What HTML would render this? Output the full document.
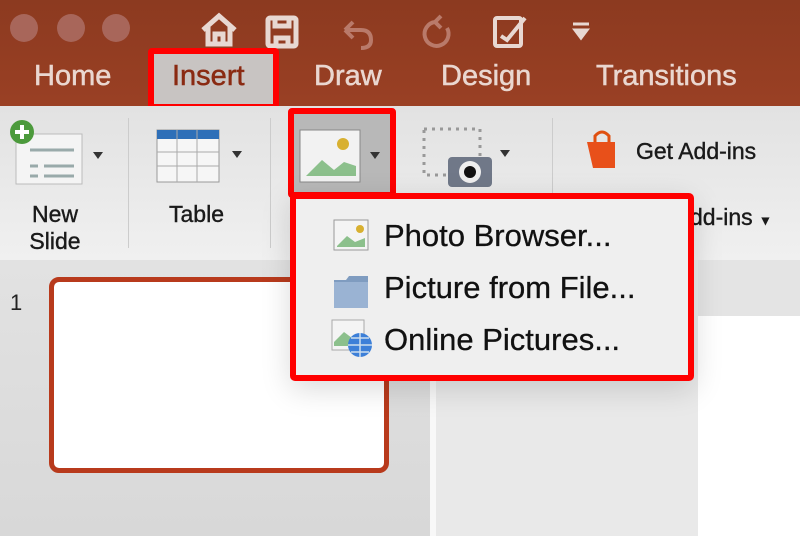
<!DOCTYPE html>
<html><head><style>
*{margin:0;padding:0;box-sizing:border-box}
body{width:800px;height:536px;overflow:hidden;position:relative;font-family:"Liberation Sans",sans-serif;background:#e6e6e6}
.a{position:absolute;white-space:nowrap}
.t{color:#ead7d0;font-size:29px;-webkit-text-stroke:0.5px #ead7d0;top:60px}
.r{font-size:23px;color:#1a1a1a;-webkit-text-stroke:0.4px #1a1a1a}
.m{font-size:31px;color:#111;-webkit-text-stroke:0.3px #111}
</style></head><body>
<div class="a" style="left:0;top:0;width:800px;height:106px;background:linear-gradient(#8c3a20,#9a4024)"></div>
<div class="a" style="left:10px;top:14px;width:28px;height:28px;border-radius:50%;background:#a8665a"></div>
<div class="a" style="left:57px;top:14px;width:28px;height:28px;border-radius:50%;background:#a8665a"></div>
<div class="a" style="left:102px;top:14px;width:28px;height:28px;border-radius:50%;background:#a8665a"></div>
<svg class="a" style="left:195px;top:8px" width="420" height="45" viewBox="0 0 420 45">
<g fill="none" stroke="#e8d8d2" stroke-width="5">
<path d="M8 22 L24 8 L40 22 M13 19 V36 H35 V19 M20 36 V26 H28 V36"/>
<rect x="73" y="10" width="28" height="28" rx="2"/><path d="M80 10 V18 H94 V10 M81 38 V30 H93 V38"/>
</g>
<g fill="none" stroke="#b97a6a" stroke-width="4">
<path d="M150 22 H166 Q176 22 176 32 Q176 40 166 40 M150 22 L158 14 M150 22 L158 30"/>
<path d="M240 14 A12 12 0 1 0 252 20 M240 14 L246 8 M240 14 L246 20"/>
</g>
<g fill="none" stroke="#e8d8d2" stroke-width="4"><rect x="300" y="10" width="26" height="28" rx="2"/><path d="M306 28 L312 32 L330 10"/></g>
<path d="M378 16 H394 M380 22 H392 L386 30 Z" stroke="#e8d8d2" stroke-width="3" fill="#e8d8d2"/>
</svg>
<div class="a t" style="left:34px">Home</div>
<div class="a" style="left:148px;top:48px;width:131px;height:62px;border:6px solid #f00;border-radius:4px;background:#c8c4c2"></div>
<div class="a t" style="left:172px;color:#8a2a12;-webkit-text-stroke:0.5px #8a2a12">Insert</div>
<div class="a t" style="left:314px">Draw</div>
<div class="a t" style="left:441px">Design</div>
<div class="a t" style="left:596px">Transitions</div>
<div class="a" style="left:0;top:106px;width:800px;height:154px;background:linear-gradient(#e2e2e2,#f0f0f0)"></div>
<div class="a" style="left:128px;top:118px;width:1px;height:130px;background:#ccc"></div>
<div class="a" style="left:270px;top:118px;width:1px;height:130px;background:#ccc"></div>
<div class="a" style="left:552px;top:118px;width:1px;height:80px;background:#ccc"></div>
<svg class="a" style="left:8px;top:118px" width="100" height="80">
<rect x="8" y="16" width="66" height="50" fill="#f4f4f4" stroke="#bbb"/>
<path d="M22 32H66M22 48H30M36 48H66M22 58H30M36 58H66" stroke="#9aa" stroke-width="3"/>
<circle cx="14" cy="14" r="12" fill="#4c9a3c"/><path d="M14 7V21M7 14H21" stroke="#fff" stroke-width="4"/>
<path d="M85 34h10l-5 7z" fill="#333"/>
</svg>
<svg class="a" style="left:155px;top:128px" width="95" height="60">
<rect x="2" y="2" width="62" height="52" fill="#f6f6f6" stroke="#999"/><rect x="2" y="2" width="62" height="9" fill="#2e6fb8"/>
<path d="M22 2V54M42 2V54M2 24H64M2 38H64" stroke="#aaa"/><path d="M77 23h10l-5 7z" fill="#333"/>
</svg>
<div class="a r" style="left:25px;top:201px;text-align:center;width:60px;line-height:27px">New<br>Slide</div>
<div class="a r" style="left:169px;top:201px">Table</div>
<div class="a" style="left:288px;top:108px;width:108px;height:90px;border:6px solid #f00;border-radius:4px;background:#b8b8b8"></div>
<svg class="a" style="left:298px;top:128px" width="90" height="60">
<rect x="2" y="2" width="60" height="52" fill="#f2f2f2" stroke="#888"/>
<circle cx="45" cy="16" r="6" fill="#d8b030"/><path d="M8 48 L24 32 L36 42 L46 34 L58 38 V48Z" fill="#8cc08c"/>
<path d="M72 24h10l-5 7z" fill="#333"/>
</svg>
<svg class="a" style="left:420px;top:125px" width="100" height="65">
<rect x="4" y="4" width="56" height="46" fill="none" stroke="#999" stroke-width="3" stroke-dasharray="3 5"/>
<rect x="28" y="32" width="44" height="30" rx="4" fill="#707888"/><circle cx="50" cy="47" r="11" fill="#eee"/><circle cx="50" cy="47" r="6" fill="#111"/>
<path d="M80 25h10l-5 7z" fill="#333"/>
</svg>
<svg class="a" style="left:585px;top:128px" width="40" height="44"><path d="M10 14 V8 Q17 0 24 8 V14" fill="none" stroke="#e05010" stroke-width="3"/><path d="M2 14 H30 V40 H8 Z" fill="#e8501a"/></svg>
<div class="a r" style="left:636px;top:138px">Get Add-ins</div>
<div class="a r" style="left:690px;top:204px">dd-ins <span style="font-size:13px">▼</span></div>
<div class="a" style="left:0;top:260px;width:430px;height:276px;background:linear-gradient(#e2e2e2,#d8d8d8)"></div>
<div class="a" style="left:430px;top:260px;width:6px;height:276px;background:#f8f8f8"></div>
<div class="a" style="left:436px;top:260px;width:262px;height:276px;background:#e9e9e9"></div>
<div class="a" style="left:698px;top:260px;width:102px;height:56px;background:#e4e4e4"></div>
<div class="a" style="left:698px;top:316px;width:102px;height:220px;background:#fff"></div>
<div class="a" style="left:10px;top:290px;font-size:22px;color:#222">1</div>
<div class="a" style="left:49px;top:277px;width:340px;height:196px;border:5px solid #b83a1c;border-radius:10px;background:#fff"></div>
<div class="a" style="left:290px;top:193px;width:404px;height:188px;border:6px solid #f00;border-radius:5px;background:#efefef;box-shadow:0 8px 30px rgba(0,0,0,.15)"></div>
<svg class="a" style="left:330px;top:218px" width="45" height="150">
<rect x="4" y="2" width="34" height="30" fill="#f4f4f4" stroke="#999"/><circle cx="30" cy="11" r="4" fill="#d8b030"/><path d="M7 28 L17 18 L25 24 L35 20V29H7Z" fill="#8cc08c"/>
<path d="M4 62 H16 L19 58 H38 V90 H4 Z" fill="#7f9cc0"/><rect x="4" y="64" width="34" height="26" fill="#9ab3d3"/>
<rect x="2" y="102" width="32" height="30" fill="#f4f4f4" stroke="#aaa"/><path d="M4 124 L14 114 L22 120 V128H4Z" fill="#8cc08c"/>
<circle cx="30" cy="127" r="12" fill="#3c7fd8"/><path d="M18 127H42M30 115V139M21 120H39M21 134H39" stroke="#cde" stroke-width="1.5"/>
</svg>
<div class="a m" style="left:384px;top:218px">Photo Browser...</div>
<div class="a m" style="left:384px;top:270px">Picture from File...</div>
<div class="a m" style="left:384px;top:322px">Online Pictures...</div>
</body></html>
